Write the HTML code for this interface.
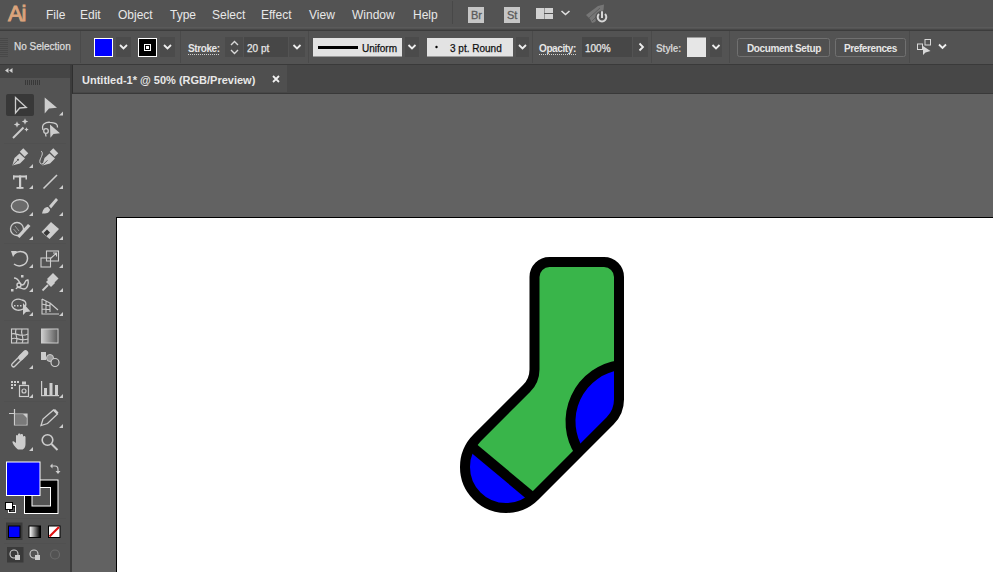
<!DOCTYPE html>
<html><head><meta charset="utf-8">
<style>
*{margin:0;padding:0;box-sizing:border-box}
html,body{width:993px;height:572px;overflow:hidden;background:#535353;font-family:"Liberation Sans",sans-serif;color:#e6e6e6}
.a{position:absolute}
#menubar{left:0;top:0;width:993px;height:29px;background:#535353}
#menusep{left:0;top:29px;width:993px;height:2px;background:#3c3c3c;border-top:1px solid #474747}
#menulite{left:0;top:27px;width:993px;height:1px;background:#5a5a5a}
.mi{position:absolute;top:8px;font-size:12px;color:#e8e8e8;line-height:14px;white-space:nowrap}
#ctrl{left:0;top:31px;width:993px;height:33px;background:#535353}
#ctrlsep{left:0;top:64px;width:993px;height:1px;background:#3a3a3a}
.ct{position:absolute;font-size:10px;line-height:12px;white-space:nowrap;color:#e6e6e6}
.dbox{position:absolute;background:#4a4a4a}
.chev{position:absolute;width:7px;height:4px}
#tabstrip{left:72px;top:65px;width:921px;height:29px;background:#474747;border-left:1px solid #2f2f2f;border-bottom:1px solid #393939}
#tab{left:73px;top:65px;width:214px;height:27px;background:#4f4f4f}
#canvas{left:72px;top:94px;width:921px;height:478px;background:#626262}
#artb{left:116px;top:217px;width:877px;height:355px;background:#fff;border-left:1px solid #000;border-top:1px solid #000}
#tools{left:0;top:65px;width:70px;height:507px;background:#535353}
#toolsedge{left:70px;top:65px;width:2px;height:507px;background:#3c3c3c}
#toolshead{left:0;top:65px;width:70px;height:13px;background:#454545}
</style></head><body>
<div id="menubar" class="a"></div>
<div id="menulite" class="a"></div><div id="menusep" class="a"></div>
<div class="a" style="left:8px;top:3px;font-size:22px;line-height:22px;color:#dba47c;-webkit-text-stroke:0.9px #dba47c;letter-spacing:-1.2px">Ai</div>
<div class="mi" style="left:46px">File</div>
<div class="mi" style="left:80px">Edit</div>
<div class="mi" style="left:118px">Object</div>
<div class="mi" style="left:170px">Type</div>
<div class="mi" style="left:212px">Select</div>
<div class="mi" style="left:261px">Effect</div>
<div class="mi" style="left:309px">View</div>
<div class="mi" style="left:352px">Window</div>
<div class="mi" style="left:413px">Help</div>
<svg class="a" style="left:0;top:0" width="993" height="30">
<rect x="452" y="1" width="1" height="23" fill="#484848"/>
<rect x="468" y="7" width="16" height="16" fill="#c6c6c6"/>
<rect x="504" y="7" width="16" height="16" fill="#c6c6c6"/>
<g fill="#d2d2d2"><rect x="536" y="8" width="8" height="11"/><rect x="544.5" y="8" width="8.5" height="5"/><rect x="544.5" y="14" width="8.5" height="5"/></g>
<path d="M561.5,11 L565.5,14.5 L569.5,11" fill="none" stroke="#e0e0e0" stroke-width="1.6"/>
<path d="M586,15 L598,6 L604,4.5 L603.5,10 L595,22 L592,23 L590,19 Z" fill="#767676"/>
<path d="M589,18 L600,8 M592,21 L602,11" stroke="#5e5e5e" stroke-width="1"/>
<circle cx="602" cy="17.6" r="6.8" fill="#535353"/>
<path d="M599,14 A4.3,4.3 0 1 0 605,14" fill="none" stroke="#d6d6d6" stroke-width="2"/>
<line x1="602" y1="11.3" x2="602" y2="18" stroke="#d6d6d6" stroke-width="2"/>
</svg>
<div class="a" style="left:471px;top:9px;font-size:11px;line-height:12px;color:#5a5a5a;-webkit-text-stroke:0.3px #5a5a5a;letter-spacing:0px">Br</div>
<div class="a" style="left:507px;top:9px;font-size:11px;line-height:12px;color:#5a5a5a;-webkit-text-stroke:0.3px #5a5a5a;letter-spacing:0px">St</div>


<div id="ctrl" class="a"></div>
<div id="ctrlsep" class="a"></div>
<!-- control bar -->
<svg class="a" style="left:0;top:30px" width="993" height="34">
<g fill="#484848"><rect x="0" y="8" width="8" height="1"/><rect x="0" y="10" width="8" height="1"/><rect x="0" y="12" width="8" height="1"/><rect x="0" y="14" width="8" height="1"/><rect x="0" y="16" width="8" height="1"/><rect x="0" y="18" width="8" height="1"/><rect x="0" y="20" width="8" height="1"/><rect x="0" y="22" width="8" height="1"/><rect x="0" y="24" width="8" height="1"/><rect x="0" y="26" width="8" height="1"/></g>
<!-- fill swatch -->
<rect x="94.5" y="8.5" width="18" height="18" fill="#0000ff" stroke="#fff" stroke-width="1"/>
<rect x="116" y="7" width="15" height="20" fill="#4b4b4b"/>
<path d="M120,15 L123.5,18.5 L127,15" fill="none" stroke="#eeeeee" stroke-width="1.8"/>
<!-- stroke swatch -->
<rect x="138.5" y="8.5" width="18" height="18" fill="#000" stroke="#fff" stroke-width="1"/>
<rect x="144" y="14" width="7" height="7" fill="#fff"/><rect x="145" y="15" width="5" height="5" fill="#000"/><rect x="146" y="16" width="3" height="3" fill="#fff"/>
<rect x="160" y="7" width="15" height="20" fill="#4b4b4b"/>
<path d="M164,15 L167.5,18.5 L171,15" fill="none" stroke="#eeeeee" stroke-width="1.8"/>
<!-- stroke label underline -->
<line x1="188" y1="24.5" x2="219" y2="24.5" stroke="#cfcfcf" stroke-width="1" stroke-dasharray="1,1"/>
<!-- spinner -->
<rect x="225" y="7" width="18" height="20" fill="#4b4b4b"/>
<path d="M231,15 L234.5,11.5 L238,15 M231,20 L234.5,23.5 L238,20" fill="none" stroke="#d8d8d8" stroke-width="1.4"/>
<rect x="244" y="7" width="44" height="20" fill="#474747"/>
<rect x="289" y="7" width="16" height="20" fill="#4b4b4b"/>
<path d="M293.5,15 L297,18.5 L300.5,15" fill="none" stroke="#eeeeee" stroke-width="1.8"/>
<!-- profile -->
<rect x="313" y="8" width="89" height="18.5" fill="#e3e3e3"/>
<rect x="318" y="16" width="40" height="3" fill="#000"/>
<rect x="405" y="7" width="14" height="20" fill="#4b4b4b"/>
<path d="M408.5,15 L412,18.5 L415.5,15" fill="none" stroke="#eeeeee" stroke-width="1.8"/>
<!-- brush -->
<rect x="427" y="8" width="86" height="18.5" fill="#e3e3e3"/>
<circle cx="436.5" cy="17" r="1.2" fill="#000"/>
<rect x="516" y="7" width="13" height="20" fill="#4b4b4b"/>
<path d="M519,15 L522.5,18.5 L526,15" fill="none" stroke="#eeeeee" stroke-width="1.8"/>
<line x1="539" y1="24.5" x2="576" y2="24.5" stroke="#cfcfcf" stroke-width="1" stroke-dasharray="1,1"/>
<rect x="582" y="7" width="50" height="20" fill="#474747"/>
<rect x="633" y="7" width="15" height="20" fill="#4b4b4b"/>
<path d="M639.5,13.5 L643,17 L639.5,20.5" fill="none" stroke="#eeeeee" stroke-width="1.8"/>
<rect x="687" y="7.5" width="19" height="19.5" fill="#e6e6e6"/>
<rect x="710" y="7" width="12" height="20" fill="#4b4b4b"/>
<path d="M712.5,15 L716,18.5 L719.5,15" fill="none" stroke="#eeeeee" stroke-width="1.8"/>
<rect x="737.5" y="8.5" width="92" height="18" rx="2" fill="#505050" stroke="#707070" stroke-width="1"/>
<rect x="835.5" y="8.5" width="70" height="18" rx="2" fill="#505050" stroke="#707070" stroke-width="1"/>
<!-- transform icon -->
<g fill="none" stroke="#d8d8d8" stroke-width="1">
<rect x="917.5" y="14" width="5" height="5.5"/>
<rect x="925" y="9.5" width="5.5" height="5.5"/>
</g>
<path d="M923,16 L923,25 L925.5,22.5 L930.5,21 Z" fill="#d8d8d8"/>
<path d="M939,14.5 L942.5,18 L946,14.5" fill="none" stroke="#f0f0f0" stroke-width="1.8"/>
<g fill="#4a4a4a"><rect x="80" y="1" width="1" height="32"/><rect x="180" y="1" width="1" height="32"/><rect x="308" y="1" width="1" height="32"/><rect x="532" y="1" width="1" height="32"/><rect x="651" y="1" width="1" height="32"/><rect x="729" y="1" width="1" height="32"/><rect x="909" y="1" width="1" height="32"/></g>
</svg>
<div class="ct" style="left:14px;top:41px;color:#dcdcdc;-webkit-text-stroke:0.25px #dcdcdc">No Selection</div>
<div class="ct" style="font-weight:bold;letter-spacing:-0.4px;left:188px;top:43px">Stroke:</div>
<div class="ct" style="left:247px;top:43px;color:#e6e6e6;-webkit-text-stroke:0.25px #e6e6e6">20 pt</div>
<div class="ct" style="left:362px;top:43px;color:#111;-webkit-text-stroke:0.25px #111">Uniform</div>
<div class="ct" style="left:450px;top:43px;color:#111;-webkit-text-stroke:0.25px #111">3 pt. Round</div>
<div class="ct" style="font-weight:bold;letter-spacing:-0.4px;left:539px;top:43px">Opacity:</div>
<div class="ct" style="left:585px;top:43px;color:#e6e6e6;-webkit-text-stroke:0.25px #e6e6e6">100%</div>
<div class="ct" style="font-weight:bold;letter-spacing:-0.4px;left:656px;top:43px;color:#cfcfcf">Style:</div>
<div class="ct" style="font-weight:bold;letter-spacing:-0.4px;left:747px;top:43px">Document Setup</div>
<div class="ct" style="font-weight:bold;letter-spacing:-0.4px;left:844px;top:43px">Preferences</div>


<div id="canvas" class="a"></div>
<div id="artb" class="a"></div>
<div id="tabstrip" class="a"></div>
<div id="tab" class="a"></div>
<div class="a" style="left:82px;top:73px;font-size:11px;font-weight:bold;line-height:14px;color:#e8e8e8">Untitled-1* @ 50% (RGB/Preview)</div>
<svg class="a" style="left:272px;top:75px" width="8" height="8"><path d="M1,1 L7,7 M7,1 L1,7" stroke="#f0f0f0" stroke-width="1.8"/></svg>

<div id="tools" class="a"></div>
<div id="toolshead" class="a"></div>
<div id="toolsedge" class="a"></div>
<svg class="a" style="left:0;top:0" width="72" height="572">
<!-- header -->
<path d="M8.5,68 L5,70.5 L8.5,73 Z M12.5,68 L9,70.5 L12.5,73 Z" fill="#d0d0d0"/>
<g fill="#383838"><rect x="25" y="80" width="1" height="5"/><rect x="27" y="80" width="1" height="5"/><rect x="29" y="80" width="1" height="5"/><rect x="31" y="80" width="1" height="5"/><rect x="33" y="80" width="1" height="5"/><rect x="35" y="80" width="1" height="5"/><rect x="37" y="80" width="1" height="5"/><rect x="39" y="80" width="1" height="5"/></g>
<!-- selected box -->
<rect x="6" y="94" width="28" height="22" rx="2" fill="#383838"/>
<g fill="none" stroke="#cdcdcd" stroke-width="1.3" stroke-linejoin="miter">
<path d="M15.5,97.5 L15.5,113 L19.7,108 L26.3,107.5 Z"/>
</g>
<path d="M44.7,97.5 L44.7,113.5 L49,108.5 L57,107.8 Z" fill="#cdcdcd"/>
<g fill="#cdcdcd">
<!-- corner triangles -->
<path d="M63,111.5 L63,115.5 L59,115.5 Z"/>
<path d="M33,164 L33,168 L29,168 Z"/>
<path d="M33,185 L33,189 L29,189 Z"/><path d="M63,185 L63,189 L59,189 Z"/>
<path d="M33,212 L33,216 L29,216 Z"/><path d="M63,212 L63,216 L59,216 Z"/>
<path d="M33,236 L33,240 L29,240 Z"/><path d="M63,236 L63,240 L59,240 Z"/>
<path d="M33,264 L33,268 L29,268 Z"/><path d="M63,264 L63,268 L59,268 Z"/>
<path d="M33,288 L33,292 L29,292 Z"/><path d="M63,288 L63,292 L59,292 Z"/>
<path d="M33,312 L33,316 L29,316 Z"/><path d="M63,312 L63,316 L59,316 Z"/>
<path d="M33,365 L33,369 L29,369 Z"/>
<path d="M33,394 L33,398 L29,398 Z"/><path d="M63,394 L63,398 L59,398 Z"/>
<path d="M63,424 L63,428 L59,428 Z"/>
<path d="M33,447 L33,451 L29,451 Z"/>
</g>
<!-- magic wand -->
<g stroke="#cdcdcd" fill="none">
<line x1="13" y1="138" x2="23.5" y2="127.5" stroke-width="2"/>
</g><path d="M17,121.3 L17.9,123.6 L20.2,124.5 L17.9,125.4 L17,127.7 L16.1,125.4 L13.8,124.5 L16.1,123.6 Z M25,118.3 L25.9,120.6 L28.2,121.5 L25.9,122.4 L25,124.7 L24.1,122.4 L21.8,121.5 L24.1,120.6 Z M26.5,127.3 L27.2,128.8 L28.7,129.5 L27.2,130.2 L26.5,131.7 L25.8,130.2 L24.3,129.5 L25.8,128.8 Z" fill="#cdcdcd"/><g>
</g>
<!-- lasso -->
<g stroke="#cdcdcd" fill="none" stroke-width="1.3">
<path d="M43,130 C41,124 46,122 50,122.3 C55,122.5 58,124 57.5,127.5"/>
<circle cx="46" cy="131" r="2.3"/>
<path d="M45.5,133.5 L46,136.5"/>
</g>
<path d="M50,124.5 L50.4,137.7 L53.5,134 L60,133.3 Z" fill="#cdcdcd"/>
<!-- pen -->
<g fill="#cdcdcd">
<path d="M12.3,165.5 L14.5,158 L19.5,153.5 L25,158.5 L20,163.5 Z"/>
<rect x="20.5" y="150" width="7" height="5" transform="rotate(45 24 152.5)"/>
</g>
<path d="M13,164.8 L17.5,160.3" stroke="#535353" stroke-width="0.9"/>
<circle cx="18" cy="159.8" r="1" fill="#535353"/>
<g fill="#cdcdcd">
<path d="M42.3,165.5 L44.5,158 L49.5,153.5 L55,158.5 L50,163.5 Z"/>
<rect x="50.5" y="150" width="7" height="5" transform="rotate(45 54 152.5)"/>
</g>
<path d="M43,164.8 L47.5,160.3" stroke="#535353" stroke-width="0.9"/>
<path d="M41,151 C44,153 41,157 40,160 C39,164 42,165 43,163" fill="none" stroke="#cdcdcd" stroke-width="1"/>
<!-- type -->
<g fill="#cdcdcd">
<rect x="13" y="175.5" width="14" height="2"/>
<rect x="19" y="175.5" width="2.2" height="13"/>
<rect x="16.5" y="187" width="7" height="1.8"/>
<rect x="13" y="175.5" width="1.5" height="4"/><rect x="25.5" y="175.5" width="1.5" height="4"/>
</g>
<line x1="43.5" y1="188.5" x2="57" y2="175" stroke="#cdcdcd" stroke-width="1.6"/>
<!-- ellipse -->
<ellipse cx="19.8" cy="206" rx="8.5" ry="6.3" fill="#6b6b6b" stroke="#cdcdcd" stroke-width="1.3"/>
<!-- paintbrush -->
<g fill="#cdcdcd">
<path d="M42,213.5 C43,209 45,207 48,207 L50,209.5 C50,212 47,214 42,213.5 Z"/>
<path d="M49,206 L56,198 L58,200 L51,208.5 Z"/>
</g>
<!-- shaper -->
<g fill="none" stroke="#cdcdcd" stroke-width="1.3">
<circle cx="17" cy="229" r="6.5"/>
</g>
<path d="M15,226 L19,231 M13.5,229 L17,233" stroke="#9a9a9a" stroke-width="1"/>
<path d="M17,236 L28,224 L30.5,226 L19.5,238 Z" fill="#cdcdcd"/>
<!-- eraser -->
<path d="M41.5,232 L51,222 L59,229 L49.5,239 Z" fill="#cdcdcd"/>
<path d="M43.5,233 L47,229.5 L50,232.5 L46.5,236 Z" fill="#383838"/>
<!-- rotate -->
<path d="M14,254 C20,249 28,252 27.5,259 C27,265 19,268 14,264" fill="none" stroke="#cdcdcd" stroke-width="1.5"/>
<path d="M11,251 L17,251 L13,257 Z" fill="#cdcdcd"/>
<!-- scale -->
<g fill="none" stroke="#cdcdcd" stroke-width="1.1">
<rect x="46.5" y="251" width="12" height="10"/>
<rect x="41" y="258" width="9.5" height="9"/>
<path d="M50,259 L56.5,253 M53,253 h3.5 v3.5"/>
</g>
<!-- warp (puppet) -->
<g fill="none" stroke="#cdcdcd" stroke-width="1.4">
<path d="M14,278 C20,278 19,285 22,285 C26,285 24,279 28,280 C29,284 27,289 24,289 C20,289 18,285 16,289"/>
<circle cx="19" cy="285" r="2"/>
</g>
<g fill="#cdcdcd"><rect x="21" y="275" width="2.5" height="2.5"/><rect x="11" y="289" width="2.5" height="2.5"/></g>
<!-- pin -->
<g fill="#cdcdcd">
<path d="M47,279 L53,273 L58.5,278.5 L52.5,284.5 Z"/>
<path d="M46,282 L50,278 L55,283 L51,287 Z"/>
<line x1="48" y1="285" x2="42.5" y2="290.5" stroke="#cdcdcd" stroke-width="1.8"/>
</g>
<!-- shape builder -->
<path d="M12,306 C11,300 17,298 22,300 C27,301 27,306 23,309 C20,311 14,311 12,306 Z" fill="none" stroke="#cdcdcd" stroke-width="1.3"/>
<g fill="#cdcdcd"><rect x="14" y="305" width="1.5" height="1.5"/><rect x="17" y="305" width="1.5" height="1.5"/><rect x="20" y="305" width="1.5" height="1.5"/></g>
<path d="M23,303 L23,315 L26,312 L30.5,311.5 Z" fill="#cdcdcd"/>
<!-- perspective grid -->
<g fill="none" stroke="#cdcdcd" stroke-width="1.1">
<path d="M42,299 L42,314 L59,314 M42,299 L50,303 L50,312 M42,304 L50,306 M42,309 L50,309.5 M46,301 L46,313 M50,303 L58,310"/>
</g>
<!-- mesh -->
<g fill="none" stroke="#cdcdcd" stroke-width="1.1">
<rect x="11.5" y="329" width="16.5" height="14"/>
<path d="M11.5,334 C16,332 20,338 28,334 M11.5,339 C16,336 20,342 28,339 M16,329 C14,334 19,338 16,343 M22,329 C20,334 25,338 22,343"/>
</g>
<!-- gradient -->
<defs><linearGradient id="gr" x1="0" x2="1"><stop offset="0" stop-color="#cfcfcf"/><stop offset="1" stop-color="#575757"/></linearGradient></defs>
<rect x="41.5" y="329" width="16.5" height="14" fill="url(#gr)" stroke="#cdcdcd" stroke-width="1"/>
<!-- eyedropper -->
<line x1="13.5" y1="365" x2="21" y2="357.5" stroke="#cdcdcd" stroke-width="5" stroke-linecap="round"/>
<line x1="13.5" y1="365" x2="20" y2="358.5" stroke="#535353" stroke-width="2.4" stroke-linecap="round"/>
<line x1="21" y1="357.5" x2="25.5" y2="353" stroke="#cdcdcd" stroke-width="5.5" stroke-linecap="round"/>
<!-- blend -->
<rect x="41" y="352" width="5" height="8" fill="#cdcdcd"/>
<circle cx="50" cy="358" r="3.5" fill="#9a9a9a" stroke="#cdcdcd" stroke-width="1"/>
<circle cx="55" cy="362.5" r="4" fill="#535353" stroke="#cdcdcd" stroke-width="1.2"/>
<!-- symbol sprayer -->
<g fill="#cdcdcd"><rect x="11" y="381" width="2" height="2"/><rect x="14" y="381" width="2" height="2"/><rect x="17" y="381" width="2" height="2"/><rect x="11" y="384" width="2" height="2"/><rect x="14" y="384" width="2" height="2"/><rect x="11" y="387" width="2" height="2"/></g>
<rect x="19.5" y="385.5" width="9" height="11" fill="none" stroke="#cdcdcd" stroke-width="1.2"/>
<rect x="22" y="381.5" width="4" height="3" fill="#cdcdcd"/>
<circle cx="24" cy="391" r="2" fill="none" stroke="#cdcdcd" stroke-width="1.2"/>
<!-- graph -->
<g fill="#cdcdcd"><rect x="41" y="381" width="1.2" height="15"/><rect x="41" y="395" width="18" height="1.2"/><rect x="44" y="388" width="3" height="7"/><rect x="49.5" y="383" width="3" height="12"/><rect x="55" y="385" width="3" height="10"/></g>
<!-- artboard -->
<g fill="none" stroke="#cdcdcd" stroke-width="1.2">
<path d="M9,413.5 L15,413.5 M14.5,409 L14.5,425 L27,425 L27,414 L14.5,414"/>
</g>
<rect x="15" y="414.5" width="11.5" height="10" fill="#7a7a7a"/>
<path d="M23,414 L27,414 L27,418 Z" fill="#cdcdcd"/>
<!-- pencil -->
<path d="M41,425.5 L43,419 L53.5,410 L57.5,414 L47.5,423.5 Z" fill="none" stroke="#cdcdcd" stroke-width="1.3"/>
<path d="M53,410.5 L55,409 L58.5,412.5 L57,414.5 Z" fill="#cdcdcd"/>
<!-- hand -->
<path d="M18,449.5 C15,447 12,443 12.5,441.5 C13.5,440.5 15,442 16,443 L16,436 C16,434.5 18,434.5 18,436 L18,440 L18,434.5 C18,433 20.5,433 20.5,434.5 L20.5,440 L20.5,435 C20.5,433.5 23,433.5 23,435 L23,441 L23,437 C23,435.5 25.5,435.5 25.5,437 L25.5,444 C25.5,447 24,449.5 22,449.5 Z" fill="#cdcdcd"/>
<!-- zoom -->
<circle cx="47.5" cy="440" r="5.3" fill="none" stroke="#cdcdcd" stroke-width="1.6"/>
<line x1="51.5" y1="444" x2="57.5" y2="450" stroke="#cdcdcd" stroke-width="2"/>
<!-- fill / stroke -->
<rect x="24" y="479.5" width="34.5" height="34.5" fill="#fff"/>
<rect x="25" y="480.5" width="32.5" height="32.5" fill="#000"/>
<rect x="31.5" y="487" width="19.5" height="19.5" fill="#fff"/>
<rect x="32.5" y="488" width="17.5" height="17.5" fill="#535353"/>
<rect x="6" y="461.5" width="34.5" height="34.5" fill="#fff"/>
<rect x="7" y="462.5" width="32.5" height="32.5" fill="#0000ff"/>
<!-- swap -->
<path d="M51,466 L55,466 C57.5,466 58,467 58,469.5 L58,472" fill="none" stroke="#cdcdcd" stroke-width="1.2"/>
<path d="M52.5,463.5 L50,466 L52.5,468.5 Z M55.5,471 L58,474 L60.5,471 Z" fill="#cdcdcd"/>
<!-- default -->
<rect x="8.5" y="505.5" width="7" height="7" fill="#000" stroke="#fff" stroke-width="1"/>
<rect x="10.5" y="507.5" width="4" height="4" fill="#535353"/>
<rect x="5.5" y="502.5" width="7" height="7" fill="#fff" stroke="#000" stroke-width="1"/>
<!-- color modes -->
<rect x="6" y="522.5" width="16.5" height="17.5" fill="#3a3a3a"/>
<rect x="8" y="525.5" width="12.5" height="12.5" fill="#000"/>
<rect x="9" y="526.5" width="10.5" height="10.5" fill="#0000ff"/>
<rect x="28.5" y="525.5" width="12.5" height="12.5" fill="#000"/>
<defs><linearGradient id="g2" x1="0" x2="1"><stop offset="0" stop-color="#fff"/><stop offset="1" stop-color="#000"/></linearGradient></defs>
<rect x="29.5" y="526.5" width="10.5" height="10.5" fill="url(#g2)"/>
<rect x="48" y="525.5" width="12.5" height="12.5" fill="#000"/>
<rect x="49" y="526.5" width="10.5" height="10.5" fill="#fff"/>
<line x1="49.5" y1="536.5" x2="59" y2="527" stroke="#e01010" stroke-width="2.2"/>
<!-- draw modes -->
<rect x="7" y="547" width="16.5" height="15.5" fill="#3a3a3a"/>
<g fill="none" stroke="#cdcdcd" stroke-width="1.1">
<circle cx="14" cy="554" r="4"/><circle cx="34" cy="554" r="4"/>
</g>
<g fill="#cdcdcd"><rect x="15" y="555" width="5" height="5"/><rect x="35" y="555" width="5" height="5"/></g>
<circle cx="55" cy="554.5" r="4.5" fill="none" stroke="#6a6a6a" stroke-width="1.2"/>
<!-- separators -->
<g fill="#505050"><rect x="4" y="143" width="62" height="1"/><rect x="4" y="243" width="62" height="1"/><rect x="4" y="320" width="62" height="1"/><rect x="4" y="401" width="62" height="1"/><rect x="4" y="518" width="62" height="1"/><rect x="4" y="543" width="62" height="1"/></g>
</svg>


<svg class="a" style="left:0;top:0" width="993" height="572">
<defs><clipPath id="sk"><path d="M534.5,277 A15,15 0 0 1 549.5,262 L604,262 A15,15 0 0 1 619,277 L619,399.6 A30,30 0 0 1 610.2,420.8 L535,496 A41,41 0 0 1 477,438 L526.5,388.5 A27,27 0 0 0 534.5,369.4 Z"/></clipPath></defs>
<path d="M534.5,277 A15,15 0 0 1 549.5,262 L604,262 A15,15 0 0 1 619,277 L619,399.6 A30,30 0 0 1 610.2,420.8 L535,496 A41,41 0 0 1 477,438 L526.5,388.5 A27,27 0 0 0 534.5,369.4 Z" fill="#39b54a"/>
<g clip-path="url(#sk)" fill="#0000ff">
<path d="M619,365.14 A57,57 0 0 0 579.21,451.79 L640,470 L640,340 Z"/>
<path d="M438.3,418.7 L564.7,524.3 L440,560 L400,460 Z"/>
</g>
<path d="M619,365.14 A57,57 0 0 0 579.21,451.79" fill="none" stroke="#000" stroke-width="10"/>
<path d="M469.9,445.1 L533.1,497.9" fill="none" stroke="#000" stroke-width="10"/>
<path d="M534.5,277 A15,15 0 0 1 549.5,262 L604,262 A15,15 0 0 1 619,277 L619,399.6 A30,30 0 0 1 610.2,420.8 L535,496 A41,41 0 0 1 477,438 L526.5,388.5 A27,27 0 0 0 534.5,369.4 Z" fill="none" stroke="#000" stroke-width="10" stroke-linejoin="round"/>
</svg>
</body></html>
